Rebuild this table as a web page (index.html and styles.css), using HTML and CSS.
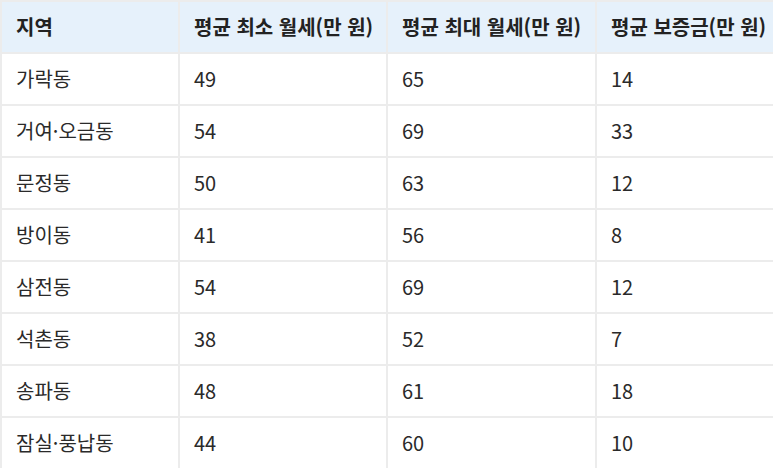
FILE: index.html
```html
<!DOCTYPE html>
<html lang="ko">
<head>
<meta charset="utf-8">
<link rel="stylesheet" href="styles.css">
</head>
<body>
<table class="rent-table">
  <colgroup>
    <col class="c1"><col class="c2"><col class="c3"><col class="c4">
  </colgroup>
  <thead>
    <tr><th>지역</th><th>평균 최소 월세(만 원)</th><th>평균 최대 월세(만 원)</th><th>평균 보증금(만 원)</th></tr>
  </thead>
  <tbody>
    <tr><td>가락동</td><td>49</td><td>65</td><td>14</td></tr>
    <tr><td>거여·오금동</td><td>54</td><td>69</td><td>33</td></tr>
    <tr><td>문정동</td><td>50</td><td>63</td><td>12</td></tr>
    <tr><td>방이동</td><td>41</td><td>56</td><td>8</td></tr>
    <tr><td>삼전동</td><td>54</td><td>69</td><td>12</td></tr>
    <tr><td>석촌동</td><td>38</td><td>52</td><td>7</td></tr>
    <tr><td>송파동</td><td>48</td><td>61</td><td>18</td></tr>
    <tr><td>잠실·풍납동</td><td>44</td><td>60</td><td>10</td></tr>
  </tbody>
</table>
</body>
</html>
```
FILE: styles.css
```css
html, body {
  margin: 0;
  padding: 0;
  background: #ffffff;
  overflow: hidden;
}
body {
  font-family: "Noto Sans CJK KR", "Noto Sans", sans-serif;
  color: #222;
}
.rent-table {
  border-collapse: collapse;
  table-layout: fixed;
  width: 790px;
}
.c1 { width: 178px; }
.c2 { width: 208px; }
.c3 { width: 209px; }
.c4 { width: 195px; }
.rent-table th,
.rent-table td {
  border: 2px solid #ececec;
  padding: 0 14px;
  text-align: left;
  white-space: nowrap;
  font-size: 20px;
  line-height: 1.2;
}
.rent-table th {
  height: 50px;
  background: #e6f1fb;
  font-weight: 700;
  color: #222;
}
.rent-table td {
  height: 50px;
  font-weight: 400;
  color: #2a2a2a;
}
```
